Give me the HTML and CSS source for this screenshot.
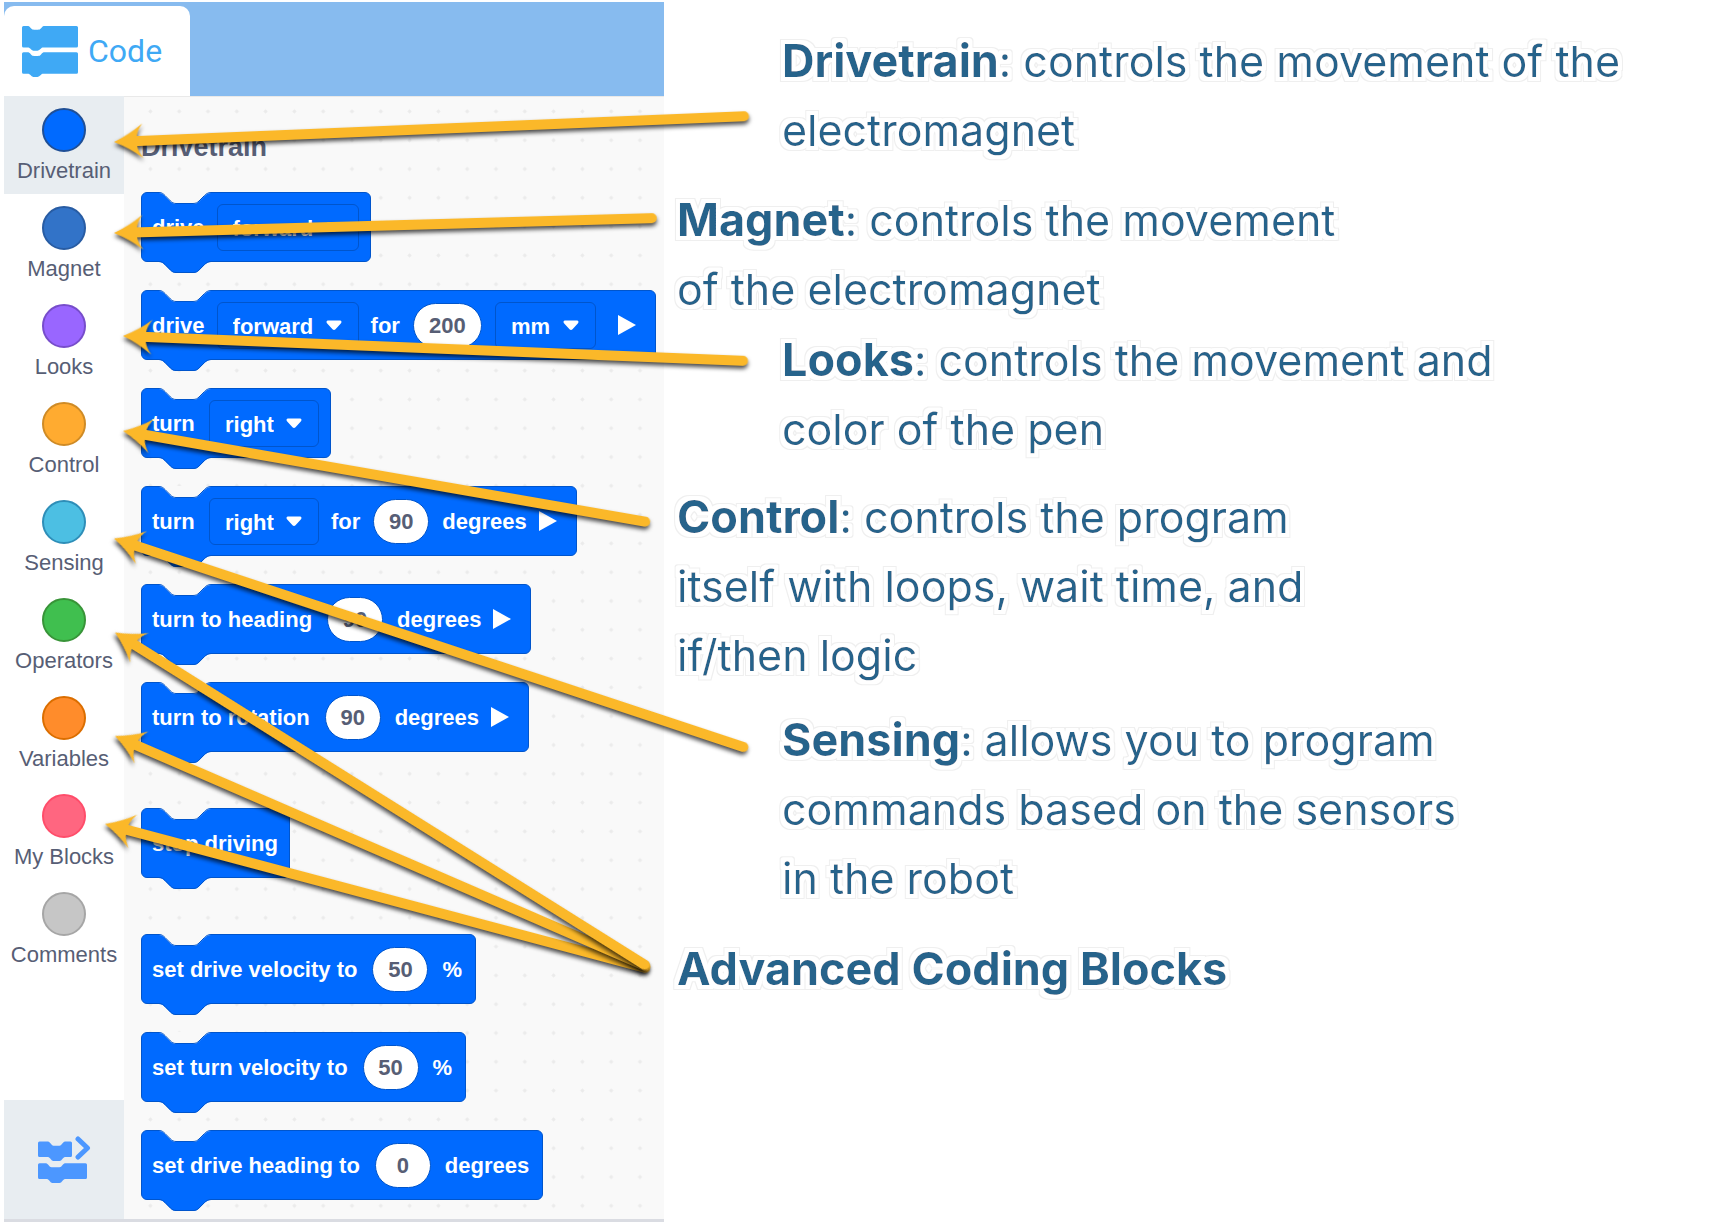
FILE: index.html
```html
<!DOCTYPE html>
<html lang="en">
<head>
<meta charset="utf-8">
<title>Coding block categories</title>
<link rel="stylesheet" href="styles.css">
</head>
<body>
<svg class="defs" width="0" height="0" aria-hidden="true">
  <defs>
    <filter id="halo" x="-5%" y="-20%" width="110%" height="140%">
      <feMorphology in="SourceAlpha" operator="dilate" radius="5" result="outer"/>
      <feFlood flood-color="#efefef"/>
      <feComposite in2="outer" operator="in" result="ring"/>
      <feMorphology in="SourceAlpha" operator="dilate" radius="4" result="inner"/>
      <feFlood flood-color="#ffffff"/>
      <feComposite in2="inner" operator="in" result="fill"/>
      <feMerge><feMergeNode in="ring"/><feMergeNode in="fill"/><feMergeNode in="SourceGraphic"/></feMerge>
    </filter>
    <symbol id="bump" viewBox="0 0 54 13">
      <path class="bump-fill" d="M0,0 V1 C3,1 4.500,2.500 6,4 L11.500,9.500 C13,11 14.500,12 17,12 H34 C37,12 38.500,11 40,9.500 L45.500,4 C47,2.500 49,1 52,1 V0 Z"/>
      <path class="bump-line" d="M0,.5 C3,.5 4.500,2 6,3.500 L11.500,9 C13,10.500 14.500,11.500 17,11.500 H34 C37,11.500 38.500,10.500 40,9 L45.500,3.500 C47,2 49,.5 52,.5"/>
    </symbol>
    <symbol id="caret" viewBox="0 0 16 11">
      <path d="M2,0.500 H14 C15.500,.5 16,2 15,3.200 L9.500,9.200 C8.600,10.200 7.400,10.200 6.500,9.200 L1,3.200 C0,2 .5,.5 2,.5Z"/>
    </symbol>
    <symbol id="play" viewBox="0 0 18 20"><path d="M0,0 L18,10 L0,20Z"/></symbol>
  </defs>
</svg>

<main class="page">
  <section class="editor">
    <header class="topbar">
      <button class="tab" type="button">
        <svg width="56" height="51" viewBox="0 0 56 51" aria-hidden="true">
          <path id="tabblock" d="M1.500,0 H5.500 C7,0 7.500,.6 8.200,1.400 L9.200,2.500 C10,3.300 10.600,3.700 12,3.700 H16 C17.400,3.700 18,3.300 18.800,2.500 L19.800,1.400 C20.500,.6 21,0 22.500,0 H54.500 A1.500,1.500 0 0 1 56,1.500 V20 A1.500,1.500 0 0 1 54.500,21.500 H21.500 C20,21.500 19.500,22 18.800,22.800 L17.800,23.600 C17,24.400 16.400,24.700 15.500,24.700 H11.500 C10.400,24.700 10,24.400 9.200,23.600 L8.200,22.600 C7.500,22 7,21.500 5.500,21.500 H1.500 A1.500,1.500 0 0 1 0,20 V1.500 A1.500,1.500 0 0 1 1.500,0Z"/>
          <use href="#tabblock" y="26.200"/>
        </svg>
        Code
      </button>
    </header>

    <div class="workarea">
      <nav class="categories" aria-label="Block categories">
        <button type="button" class="category drivetrain active"><span class="dot"></span>Drivetrain</button>
        <button type="button" class="category magnet"><span class="dot"></span>Magnet</button>
        <button type="button" class="category looks"><span class="dot"></span>Looks</button>
        <button type="button" class="category control"><span class="dot"></span>Control</button>
        <button type="button" class="category sensing"><span class="dot"></span>Sensing</button>
        <button type="button" class="category operators"><span class="dot"></span>Operators</button>
        <button type="button" class="category variables"><span class="dot"></span>Variables</button>
        <button type="button" class="category myblocks"><span class="dot"></span>My Blocks</button>
        <button type="button" class="category comments"><span class="dot"></span>Comments</button>
        <button type="button" class="toggle" aria-label="Toggle block palette">
          <svg width="53" height="48" viewBox="0 0 53 48" aria-hidden="true">
            <path d="M1.500,5.500 H9 C10.500,5.500 11.200,6 12,6.800 L13.300,8.200 C14.200,9.200 15,9.700 16.500,9.700 H20.500 C22,9.700 22.800,9.200 23.700,8.200 L25,6.800 C25.800,6 26.500,5.500 28,5.500 H32.500 A1.500,1.500 0 0 1 34,7 V19.500 A1.500,1.500 0 0 1 32.500,21 H28 C26.500,21 25.800,21.500 25,22.300 L23.700,23.700 C22.800,24.700 22,25 20.500,25 H16.500 C15,25 14.200,24.700 13.300,23.700 L12,22.300 C11.200,21.500 10.500,21 9,21 H1.500 A1.500,1.500 0 0 1 0,19.500 V7 A1.500,1.500 0 0 1 1.500,5.500Z"/>
            <path d="M1.500,27.200 H7 C8.500,27.200 9.200,27.700 10,28.500 L11.300,29.900 C12.200,30.900 13,31.300 14.500,31.300 H20.500 C22,31.300 22.800,30.900 23.700,29.900 L25,28.500 C25.800,27.700 26.500,27.200 28,27.200 H47.500 A1.500,1.500 0 0 1 49,28.700 V41.500 A1.500,1.500 0 0 1 47.500,43 H28 C26.500,43 25.800,43.500 25,44.300 L23.700,45.700 C22.800,46.700 22,47 20.500,47 H15.500 C14,47 13.200,46.700 12.300,45.700 L11,44.300 C10.200,43.500 9.500,43 8,43 H1.500 A1.500,1.500 0 0 1 0,41.500 V28.700 A1.500,1.500 0 0 1 1.500,27.200Z"/>
            <path class="chevron" d="M40,3 L49.500,12 L40,21"/>
          </svg>
        </button>
      </nav>

      <div class="palette">
        <svg class="grid" width="100%" height="100%" aria-hidden="true">
          <defs><pattern id="dots" x="12" y="0" width="28.800" height="28.800" patternUnits="userSpaceOnUse"><path d="M14.400,12.200 L16.600,14.400 L14.400,16.600 L12.200,14.400Z"/></pattern></defs>
          <rect width="100%" height="100%" fill="url(#dots)"/>
        </svg>
        <h2>Drivetrain</h2>
        <div class="blocks">
          <div class="block"><svg class="notch"><use href="#bump"/></svg><svg class="stud"><use href="#bump"/></svg>
            <span>drive</span><label class="menu"><select aria-label="Direction"><option>forward</option></select><svg><use href="#caret"/></svg></label></div>
          <div class="block"><svg class="notch"><use href="#bump"/></svg><svg class="stud"><use href="#bump"/></svg>
            <span>drive</span><label class="menu"><select aria-label="Direction"><option>forward</option></select><svg><use href="#caret"/></svg></label><span>for</span><input class="wide" aria-label="Distance" value="200"><label class="menu"><select aria-label="Unit"><option>mm</option></select><svg><use href="#caret"/></svg></label><button type="button" class="play" aria-label="Expand"><svg><use href="#play"/></svg></button></div>
          <div class="block"><svg class="notch"><use href="#bump"/></svg><svg class="stud"><use href="#bump"/></svg>
            <span class="short">turn</span><label class="menu"><select aria-label="Direction"><option>right</option></select><svg><use href="#caret"/></svg></label></div>
          <div class="block"><svg class="notch"><use href="#bump"/></svg><svg class="stud"><use href="#bump"/></svg>
            <span class="short">turn</span><label class="menu"><select aria-label="Direction"><option>right</option></select><svg><use href="#caret"/></svg></label><span>for</span><input aria-label="Angle" value="90"><span>degrees</span><button type="button" class="play" aria-label="Expand"><svg><use href="#play"/></svg></button></div>
          <div class="block"><svg class="notch"><use href="#bump"/></svg><svg class="stud"><use href="#bump"/></svg>
            <span>turn to heading</span><input aria-label="Heading" value="90"><span>degrees</span><button type="button" class="play" aria-label="Expand"><svg><use href="#play"/></svg></button></div>
          <div class="block"><svg class="notch"><use href="#bump"/></svg><svg class="stud"><use href="#bump"/></svg>
            <span>turn to rotation</span><input aria-label="Rotation" value="90"><span>degrees</span><button type="button" class="play" aria-label="Expand"><svg><use href="#play"/></svg></button></div>
          <div class="block group"><svg class="notch"><use href="#bump"/></svg><svg class="stud"><use href="#bump"/></svg>
            <span>stop driving</span></div>
          <div class="block group"><svg class="notch"><use href="#bump"/></svg><svg class="stud"><use href="#bump"/></svg>
            <span>set drive velocity to</span><input aria-label="Drive velocity" value="50"><span>%</span></div>
          <div class="block"><svg class="notch"><use href="#bump"/></svg><svg class="stud"><use href="#bump"/></svg>
            <span>set turn velocity to</span><input aria-label="Turn velocity" value="50"><span>%</span></div>
          <div class="block"><svg class="notch"><use href="#bump"/></svg><svg class="stud"><use href="#bump"/></svg>
            <span>set drive heading to</span><input aria-label="Drive heading" value="0"><span>degrees</span></div>
        </div>
      </div>
    </div>
  </section>

  <section class="notes">
    <p class="inset"><strong>Drivetrain</strong>: controls the movement of the<br>electromagnet</p>
    <p class="n-magnet"><strong>Magnet</strong>: controls the movement<br>of the electromagnet</p>
    <p class="inset n-looks"><strong>Looks</strong>: controls the movement and<br>color of the pen</p>
    <p class="n-control"><strong>Control</strong>: controls the program<br>itself with loops, wait time, and<br>if/then logic</p>
    <p class="inset n-sensing"><strong>Sensing</strong>: allows you to program<br>commands based on the sensors<br>in the robot</p>
    <p class="n-advanced"><strong>Advanced Coding Blocks</strong></p>
  </section>

  <svg class="arrows" width="780" height="1100" viewBox="0 0 780 1100" aria-hidden="true">
    <g transform="translate(114 142) rotate(-2.340)"><path d="M0,0 Q16,-7 29,-17.500 Q24,-11 23,-5 H630.500 A5,5 0 0 1 630.500,5 H23 Q24,11 29,17.500 Q16,7 0,0Z"/></g>
    <g transform="translate(114 233) rotate(-1.580)"><path d="M0,0 Q16,-7 29,-17.500 Q24,-11 23,-5 H538 A5,5 0 0 1 538,5 H23 Q24,11 29,17.500 Q16,7 0,0Z"/></g>
    <g transform="translate(123 336) rotate(2.290)"><path d="M0,0 Q16,-7 29,-17.500 Q24,-11 23,-5 H620.500 A5,5 0 0 1 620.500,5 H23 Q24,11 29,17.500 Q16,7 0,0Z"/></g>
    <g transform="translate(123 431) rotate(9.850)"><path d="M0,0 Q16,-7 29,-17.500 Q24,-11 23,-5 H530 A5,5 0 0 1 530,5 H23 Q24,11 29,17.500 Q16,7 0,0Z"/></g>
    <g transform="translate(114 538.500) rotate(18.330)"><path d="M0,0 Q16,-7 29,-17.500 Q24,-11 23,-5 H663 A5,5 0 0 1 663,5 H23 Q24,11 29,17.500 Q16,7 0,0Z"/></g>
    <g transform="translate(105 824) rotate(14.900)"><path d="M0,0 Q16,-7 29,-17.500 Q24,-11 23,-5 H559 A5,5 0 0 1 559,5 H23 Q24,11 29,17.500 Q16,7 0,0Z"/></g>
    <g transform="translate(115 736) rotate(23.440)"><path d="M0,0 Q16,-7 29,-17.500 Q24,-11 23,-5 H578 A5,5 0 0 1 578,5 H23 Q24,11 29,17.500 Q16,7 0,0Z"/></g>
    <g transform="translate(115 632.500) rotate(32.100)"><path d="M0,0 Q16,-7 29,-17.500 Q24,-11 23,-5 H625 A5,5 0 0 1 625,5 H23 Q24,11 29,17.500 Q16,7 0,0Z"/></g>
  </svg>
</main>
</body>
</html>
```
FILE: styles.css
```css
* { box-sizing: border-box; }

body {
  margin: 0;
  background: #fff;
  font-family: "Liberation Sans", Arial, sans-serif;
}

button, select, input { font: inherit; }
button { cursor: pointer; }

.defs { position: absolute; }

.page {
  position: relative;
  display: flex;
  min-height: 100vh;
  padding: 2px 0 0 4px;
}

/* Editor panel */
.editor {
  display: flex;
  flex: 0 0 660px;
  flex-direction: column;
  border-bottom: 3px solid #dadce2;
}

.topbar {
  display: flex;
  padding-top: 4px;
  background: #87bbef;
}

.tab {
  display: flex;
  align-items: center;
  gap: 10px;
  height: 90px;
  padding: 0 28px 0 18px;
  border: 0;
  border-radius: 10px 10px 0 0;
  background: #fff;
  color: #3fa9f5;
  font-family: Roboto, sans-serif;
  font-size: 32px;
}
.tab svg { fill: currentColor; }

.workarea { display: flex; flex: 1; }

.categories {
  display: flex;
  flex: 0 0 120px;
  flex-direction: column;
}

.category {
  display: flex;
  flex-direction: column;
  align-items: center;
  gap: 7px;
  height: 98px;
  padding: 12px 0 0;
  border: 0;
  background: none;
  color: #575e75;
  font-size: 22px;
  line-height: 24px;
  white-space: nowrap;
}
.category.active { background: #e8edf1; }

.dot {
  width: 44px;
  height: 44px;
  border: 2px solid;
  border-radius: 50%;
}
.drivetrain .dot { background: #006aff; border-color: #1f4f96; }
.magnet .dot { background: #3273c8; border-color: #285ca3; }
.looks .dot { background: #9966ff; border-color: #774dcb; }
.control .dot { background: #ffab30; border-color: #cf8b26; }
.sensing .dot { background: #4cbfe3; border-color: #2e8eb8; }
.operators .dot { background: #40bf4f; border-color: #389438; }
.variables .dot { background: #ff8c2b; border-color: #db6e00; }
.myblocks .dot { background: #ff6680; border-color: #ff4d6a; }
.comments .dot { background: #c6c6c6; border-color: #a6a6a6; }

.toggle {
  display: flex;
  align-items: center;
  justify-content: center;
  height: 119px;
  margin-top: auto;
  padding: 0;
  border: 0;
  background: #e8edf1;
}
.toggle svg { fill: #4c97ff; }
.toggle .chevron { fill: none; stroke: #4c97ff; stroke-width: 5; stroke-linecap: round; stroke-linejoin: round; }

/* Block palette */
.palette {
  position: relative;
  flex: 1;
  padding: 35px 0 8px 17px;
  border-top: 1px solid #e9e9e9;
  background: #f9f9f9;
}
.grid { position: absolute; inset: 0; fill: #ebebeb; }

h2 {
  position: relative;
  margin: 0 0 30px;
  color: #575e75;
  font-size: 27px;
  line-height: 30px;
}

.blocks {
  position: relative;
  display: flex;
  flex-direction: column;
  align-items: flex-start;
  gap: 28px;
}

.block {
  position: relative;
  display: flex;
  align-items: center;
  gap: 12px;
  height: 70px;
  padding: 0 11px 0 10px;
  border: 1px solid #0055cc;
  border-radius: 6px;
  background: #006aff;
  color: #fff;
  font-size: 22px;
  font-weight: 700;
  white-space: nowrap;
}
.block.group { margin-top: 28px; }
.block span { padding-top: 2px; }
.block .short { min-width: 45px; }

.notch, .stud {
  position: absolute;
  left: 17px;
  width: 54px;
  height: 13px;
}
.notch { top: -1px; --bump: #f9f9f9; }
.stud { top: 68px; --bump: #006aff; }
.bump-fill { fill: var(--bump); }
.bump-line { fill: none; stroke: #0055cc; }

.menu {
  position: relative;
  display: flex;
  align-items: center;
}
.menu select {
  height: 47px;
  padding: 2px 44px 0 15px;
  appearance: none;
  border: 1px solid #0055cc;
  border-radius: 6px;
  background: #006aff;
  color: #fff;
}
.menu svg {
  position: absolute;
  right: 17px;
  width: 16px;
  height: 11px;
  fill: #fff;
  pointer-events: none;
}

.block input {
  width: 56px;
  height: 45px;
  margin: 0 1px;
  padding: 2px 0 0;
  border: 1px solid #0055cc;
  border-radius: 23px;
  background: #fff;
  color: #575e75;
  text-align: center;
}
.block input.wide { width: 69px; }
.block > span:first-of-type + input { margin: 0 2px 0 3px; }
.block input + span:last-child { margin-right: 2px; }

.play {
  display: flex;
  margin-right: 8px;
  padding: 0;
  border: 0;
  background: none;
}
.menu + .play { margin-left: 10px; }
.play svg { width: 18px; height: 20px; fill: #fff; }

/* Explanations */
.notes {
  flex: 1;
  padding: 25px 0 0 13px;
  color: #25638b;
  font-family: Inter, sans-serif;
  font-size: 43px;
  line-height: 69px;
  white-space: nowrap;
}
.notes p { margin: 0; filter: url(#halo); }
.notes strong { font-size: 45px; line-height: 1; }
.notes .inset { padding-left: 105px; }
.notes .n-magnet { margin-top: 21px; }
.notes .n-looks { margin-top: 2px; }
.notes .n-control { margin-top: 19px; }
.notes .n-sensing { margin-top: 16px; }
.notes .n-advanced { margin-top: 22px; }

.arrows {
  position: absolute;
  top: 0;
  left: 0;
  fill: #fbb829;
  pointer-events: none;
}
.arrows g { filter: drop-shadow(0 3px 2px rgba(0, 0, 0, .7)); }
```
